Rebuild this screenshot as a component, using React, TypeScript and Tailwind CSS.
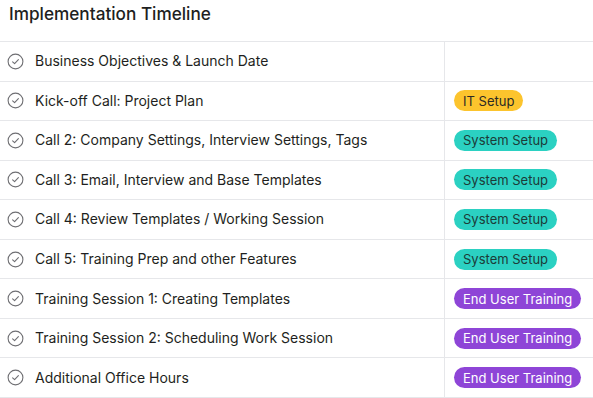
const ROWS: { title: string; tag?: "it" | "system" | "training" }[] = [
  { title: "Business Objectives & Launch Date" },
  { title: "Kick-off Call: Project Plan", tag: "it" },
  { title: "Call 2: Company Settings, Interview Settings, Tags", tag: "system" },
  { title: "Call 3: Email, Interview and Base Templates", tag: "system" },
  { title: "Call 4: Review Templates / Working Session", tag: "system" },
  { title: "Call 5: Training Prep and other Features", tag: "system" },
  { title: "Training Session 1: Creating Templates", tag: "training" },
  { title: "Training Session 2: Scheduling Work Session", tag: "training" },
  { title: "Additional Office Hours", tag: "training" },
];

const TAGS = {
  it: { label: "IT Setup", cls: "bg-[#fcc42d] text-[#2b2a25]" },
  system: { label: "System Setup", cls: "bg-[#2bd1c2] text-[#1c3b38]" },
  training: { label: "End User Training", cls: "bg-[#8e45d7] text-white" },
};

function CheckCircle() {
  return (
    <svg width="17" height="17" viewBox="0 0 17 17" fill="none" className="shrink-0">
      <circle cx="8.5" cy="8.5" r="7.4" stroke="#6f6f73" strokeWidth="1.1" />
      <path d="M5.6 8.8 L7.6 10.7 L11.4 6.6" stroke="#6f6f73" strokeWidth="1.1" strokeLinecap="round" strokeLinejoin="round" />
    </svg>
  );
}

export default function App() {
  return (
    <div className="w-[593px] h-[398px] bg-white overflow-hidden font-['Inter',sans-serif] text-[#1f1f1f]">
      {/* Heading */}
      <div className="h-[41px] pl-[9px] pt-[2px]">
        <h2 className="text-[17.2px] leading-[24px] font-medium text-[#1e1f21]">
          Implementation Timeline
        </h2>
      </div>

      {/* Table */}
      <div className="border-t border-[#e6e7ea]">
        {ROWS.map((row) => {
          const tag = row.tag ? TAGS[row.tag] : null;
          return (
            <div key={row.title} className="flex h-[39.55px] border-b border-[#e6e7ea]">
              <div className="w-[445px] flex items-center gap-[11px] pl-[7px] border-r border-[#e6e7ea]">
                <CheckCircle />
                <span className="text-[14px] leading-none text-[#1e1f21]">{row.title}</span>
              </div>
              <div className="flex-1 flex items-center pl-[9px]">
                {tag && (
                  <span className={`inline-flex items-center h-[21px] px-[9px] pt-px rounded-full text-[13px] leading-none ${tag.cls}`}>
                    {tag.label}
                  </span>
                )}
              </div>
            </div>
          );
        })}
      </div>
    </div>
  );
}
